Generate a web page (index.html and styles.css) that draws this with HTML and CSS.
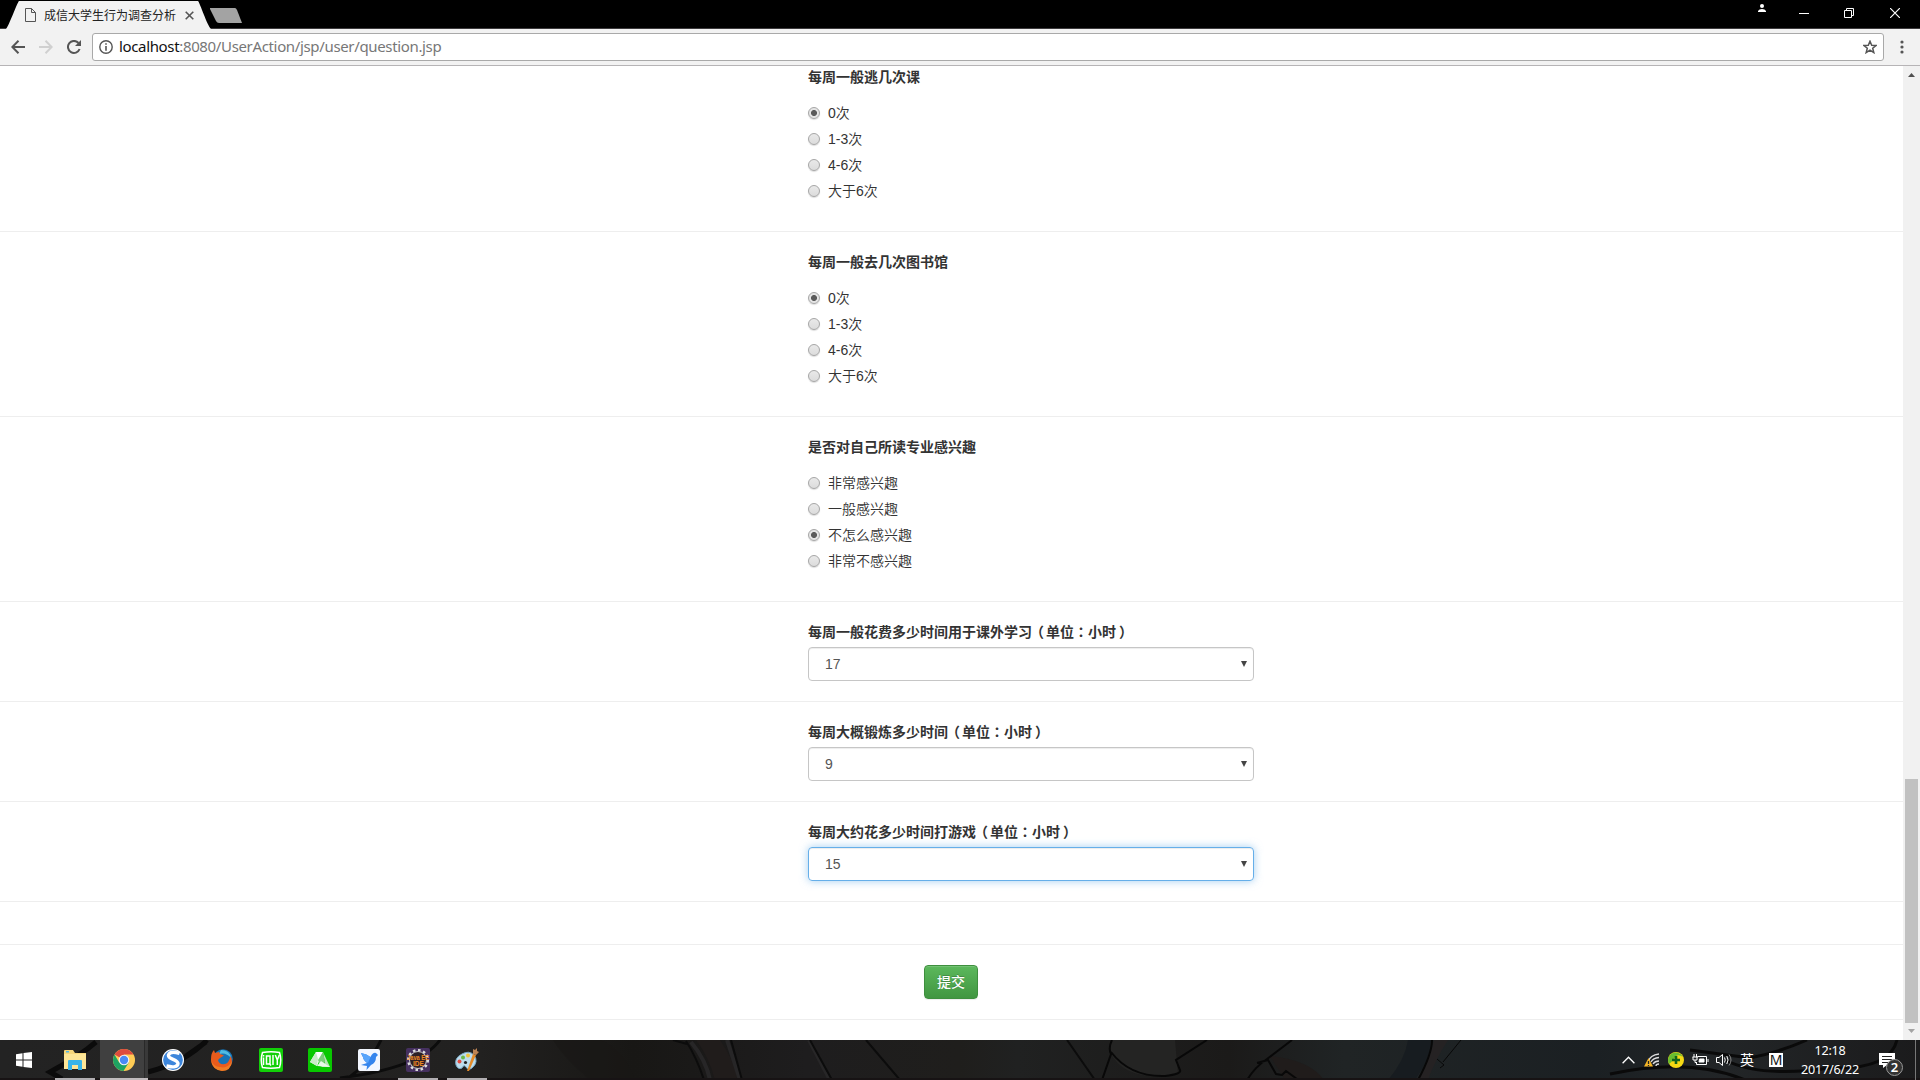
FILE: index.html
```html
<!DOCTYPE html>
<html lang="zh-CN">
<head>
<meta charset="utf-8">
<title>成信大学生行为调查分析</title>
<link rel="stylesheet" href="styles.css">
</head>
<body>
<div class="screen">
  <header class="titlebar">
    <svg class="tabs" width="260" height="29" viewBox="0 0 260 29">
      <path d="M6 29 C9 26 17 3 19 1 H198 C200 3 207 25 211 29Z" fill="#f2f2f2"/>
      <path d="M210 8 H235 Q236 8 237 10 L242 23 H219 Q217 23 216 21 L210 9Z" fill="#a3a3a3"/>
    </svg>
    <div class="tab">
      <svg width="11" height="14" viewBox="0 0 11 14" fill="none" stroke="#555"><path d="M.5.5H6.500L10.500 4.500V13.500H.500Z M6.500.500V4.500H10.500"/></svg>
      <span class="tab-title">成信大学生行为调查分析</span>
      <svg width="9" height="9" viewBox="0 0 9 9" stroke="#555" stroke-width="1.6"><path d="M.7.7 8.300 8.300M8.300.700.700 8.300"/></svg>
    </div>
    <div class="window-controls">
      <svg class="person" width="8" height="9" viewBox="0 0 8 9" fill="#fff"><circle cx="4" cy="2" r="2"/><path d="M0 8V7Q1 5 4 5T8 7V8Z"/></svg>
      <svg class="minimize" width="10" height="10" viewBox="0 0 10 10" stroke="#fff"><path d="M0 5.500H10"/></svg>
      <svg class="restore" width="10" height="10" viewBox="0 0 10 10" fill="none" stroke="#fff"><path d="M.5 2.500H7.500V9.500H.500ZM2.500 2.500V.500H9.500V7.500H7.500"/></svg>
      <svg class="close" width="10" height="10" viewBox="0 0 10 10" stroke="#fff" stroke-width="1.2"><path d="M0 0 10 10M10 0 0 10"/></svg>
    </div>
  </header>
  <nav class="toolbar">
    <svg width="14" height="14" viewBox="0 0 14 14" fill="none" stroke="#555" stroke-width="2"><path d="M14 7H1.500M7.500.800 1.300 7 7.500 13.200"/></svg>
    <svg width="14" height="14" viewBox="0 0 14 14" fill="none" stroke="#d0d0d0" stroke-width="2"><path d="M0 7H12.500M6.500.800 12.700 7 6.500 13.200"/></svg>
    <svg width="14" height="14" viewBox="0 0 14 14" fill="none" stroke="#555" stroke-width="2"><path d="M12.600 9A6 6 0 1 1 11.500 3"/><path d="M14 0V6H8Z" fill="#555" stroke="none"/></svg>
    <div class="address">
      <svg width="14" height="14" viewBox="0 0 14 14"><circle cx="7" cy="7" r="6.200" fill="none" stroke="#555" stroke-width="1.400"/><path d="M6.200 3.200H7.800V4.800H6.200ZM6.200 6H7.800V10.800H6.200Z" fill="#555"/></svg>
      <span class="url">localhost<span class="path">:8080/UserAction/jsp/user/question.jsp</span></span>
      <svg width="14" height="14" viewBox="0 0 14 14" fill="none" stroke="#555" stroke-width="1.500"><path d="M7 1.200 8.700 5.200 13 5.500 9.700 8.300 10.800 12.600 7 10.200 3.200 12.600 4.300 8.300 1 5.500 5.300 5.200Z"/></svg>
    </div>
    <svg class="more" width="4" height="14" viewBox="0 0 4 14" fill="#555"><circle cx="2" cy="2" r="1.600"/><circle cx="2" cy="7" r="1.600"/><circle cx="2" cy="12" r="1.600"/></svg>
  </nav>
  <div class="viewport">
    <form class="survey">
      <section class="question first">
        <h2>每周一般逃几次课</h2>
        <div class="options">
          <label><input type="radio" name="skip" checked>0次</label>
          <label><input type="radio" name="skip">1-3次</label>
          <label><input type="radio" name="skip">4-6次</label>
          <label><input type="radio" name="skip">大于6次</label>
        </div>
      </section>
      <section class="question">
        <h2>每周一般去几次图书馆</h2>
        <div class="options">
          <label><input type="radio" name="library" checked>0次</label>
          <label><input type="radio" name="library">1-3次</label>
          <label><input type="radio" name="library">4-6次</label>
          <label><input type="radio" name="library">大于6次</label>
        </div>
      </section>
      <section class="question">
        <h2>是否对自己所读专业感兴趣</h2>
        <div class="options">
          <label><input type="radio" name="major">非常感兴趣</label>
          <label><input type="radio" name="major">一般感兴趣</label>
          <label><input type="radio" name="major" checked>不怎么感兴趣</label>
          <label><input type="radio" name="major">非常不感兴趣</label>
        </div>
      </section>
      <section class="question">
        <h2>每周一般花费多少时间用于课外学习<span class="open">（</span>单位<span class="colon" lang="zh-TW">：</span>小时<span class="shut">）</span></h2>
        <div class="select">17<svg width="6" height="6" viewBox="0 0 6 6"><path d="M0 0H6L3 6Z" fill="#444"/></svg></div>
      </section>
      <section class="question">
        <h2>每周大概锻炼多少时间<span class="open">（</span>单位<span class="colon" lang="zh-TW">：</span>小时<span class="shut">）</span></h2>
        <div class="select">9<svg width="6" height="6" viewBox="0 0 6 6"><path d="M0 0H6L3 6Z" fill="#444"/></svg></div>
      </section>
      <section class="question">
        <h2>每周大约花多少时间打游戏<span class="open">（</span>单位<span class="colon" lang="zh-TW">：</span>小时<span class="shut">）</span></h2>
        <div class="select focused">15<svg width="6" height="6" viewBox="0 0 6 6"><path d="M0 0H6L3 6Z" fill="#444"/></svg></div>
      </section>
      <div class="spacer"></div>
      <div class="actions"><button class="submit" type="button">提交</button></div>
      <div class="spacer"></div>
    </form>
    <div class="scrollbar">
      <svg width="7" height="4" viewBox="0 0 7 4"><path d="M0 4 3.500 0 7 4Z" fill="#505050"/></svg>
      <div class="thumb"></div>
      <svg width="7" height="4" viewBox="0 0 7 4"><path d="M0 0 3.500 4 7 0Z" fill="#a3a3a3"/></svg>
    </div>
  </div>
  <footer class="taskbar">
    <svg class="wallpaper" width="1920" height="40" viewBox="0 0 1920 40" fill="none">
      <defs><linearGradient id="bar"><stop offset="0" stop-color="#232323"/><stop offset=".25" stop-color="#222120"/><stop offset=".33" stop-color="#181715"/><stop offset=".42" stop-color="#1e1d1e"/><stop offset=".5" stop-color="#1f1e1c"/><stop offset=".53" stop-color="#202121"/><stop offset=".64" stop-color="#1b1a19"/><stop offset=".7" stop-color="#202425"/><stop offset=".83" stop-color="#1b2023"/><stop offset=".9" stop-color="#222527"/><stop offset="1" stop-color="#1b1b1c"/></linearGradient></defs>
      <path fill="url(#bar)" d="M0 0H1920V40H0Z"/>
      <path fill="#191716" d="M553 0Q563 17 590 40H635Q625 10 600 0Z" opacity=".6"/>
      <path fill="#201c1b" d="M696 0H720Q734 20 738 40H715Q708 15 696 0ZM1270 16Q1310 20 1324 40H1285Z"/>
      <path stroke="#272627" stroke-width="4" d="M691 2Q706 20 710 40M727 0 740 40M809 0 830 40"/>
      <path fill="#242423" d="M1111 0H1175L1178 34Q1125 43 1110 12Z"/>
      <path fill="#171c20" d="M1408 0H1431Q1430 20 1415 40H1388Q1405 20 1408 0Z"/>
      <path fill="#252223" d="M1434 0H1448Q1435 20 1428 40H1417Q1430 20 1434 0Z"/>
      <path stroke="#0b0b0b" stroke-width="5" d="M96 2Q80 16 50 32L62 39M207 0Q186 22 148 32M206 2 186 16"/>
      <path stroke="#0c0c0c" stroke-width="3" d="M381 0Q370 24 345 40M440 0Q420 28 340 38"/>
      <path stroke="#0c0c0c" stroke-width="2" d="M673 0 687 4M686 1Q697 18 704 40M731 0 742 40M810 0 832 40M866 0 900 40M1067 0 1095 40"/>
      <path stroke="#080808" stroke-width="2" d="M1112 0Q1108 8 1111 14L1102 40M1111 12Q1130 37 1165 36 1182 34 1180 30L1176 20 1207 0M1292 0 1267 19Q1255 27 1247 40M1257 23 1268 20 1276 34 1282 35 1286 31 1297 39M1432 0Q1432 14 1418 40"/>
      <path stroke="#080808" d="M1461 0 1443 22M1437 19 1444 25 1440 28"/>
      <path stroke="#0a0a0a" stroke-width="3" d="M1807 0Q1780 12 1750 18L1690 10M1725 20Q1760 38 1830 28 1890 30 1897 0M1610 34Q1690 17 1745 40"/>
      <path fill="#171314" d="M0 38H1920V40H0Z"/>
    </svg>
    <div class="apps">
      <div class="app start"><svg width="16" height="16" viewBox="0 0 16 16" fill="#fff"><path d="M0 2.200 6.500 1.300V7.500H0ZM7.500 1.100 16 0V7.500H7.500ZM0 8.500H6.500V14.700L0 13.800ZM7.500 8.500H16V16L7.500 14.900Z"/></svg></div>
      <div class="app running"><svg width="22" height="20" viewBox="0 0 22 20"><path d="M0 3V1Q0 0 1 0H9L11 3H22V19H0Z" fill="#f6d67a"/><path d="M0 4H22V19H0Z" fill="#fde596"/><path d="M2 1H5V2.500H2Z" fill="#56b7e5"/><path d="M4 20V11Q4 10 5 10H17Q18 10 18 11V20H14V15H8V20Z" fill="#39b4e9"/></svg></div>
      <div class="app active"><svg width="22" height="22" viewBox="0 0 22 22"><circle cx="11" cy="11" r="11" fill="#fc5"/><path d="M11 11 1.500 5.500A11 11 0 0 1 20.500 5.500H11Z" fill="#dd4b3e"/><path d="M1.500 5.500A11 11 0 0 0 10.500 22L15.800 13.500 11 11 6.200 13.500Z" fill="#1ea362"/><circle cx="11" cy="11" r="5.300" fill="#f5f5f5"/><circle cx="11" cy="11" r="4.200" fill="#4a8af4"/></svg></div>
      <div class="app"><svg width="22" height="22" viewBox="0 0 22 22"><circle cx="11" cy="11" r="11" fill="#fff"/><circle cx="11" cy="11" r="9.900" fill="#3d86db"/><path d="M17.500 4.500Q8 1.500 6.500 6C5.500 10.500 16 10 16 14.500Q15.500 19.500 4.500 17" fill="none" stroke="#fff" stroke-width="3.400"/></svg></div>
      <div class="app"><svg width="22" height="22" viewBox="0 0 22 22"><circle cx="12" cy="10" r="9.800" fill="#1673b5"/><path d="M10 1Q19 1 20 9 15 3 8 5Z" fill="#4fbbe2"/><path d="M0 10Q0 4 3 1L4 4 8 3 9 5 13 6.500 9 9 7 11Q8 16 14 15 18 14 19.500 7 23 14 18 19A11 11 0 0 1 0 11Z" fill="#e95b1c"/><path d="M0 10Q2 18 9 18 17 20 21 12 20 22 11 22 1 21 0 10Z" fill="#ef7c23"/></svg></div>
      <div class="app"><svg width="24" height="24" viewBox="0 0 24 24"><rect width="24" height="24" rx="2" fill="#12cf08"/><path d="M3.500 4.500Q12 3 20.500 4.500 23 12 20.500 19.500 12 21 3.500 19.500 1 12 3.500 4.500Z" fill="none" stroke="#fff" stroke-width="1.500"/><path d="M4.500 7V8.500M4.500 9.500V17M7.500 8H11V16H7.500ZM10 15 12 17.500M14 7V17M16.300 7 18.300 12 20.300 7M18.300 12V17" fill="none" stroke="#fff" stroke-width="1.500"/></svg></div>
      <div class="app"><svg width="24" height="24" viewBox="0 0 24 24"><rect width="24" height="24" rx="2" fill="#08c800"/><path d="M8 4H15L9 18 2 14Z" fill="#fff"/><path d="M8 4 10 11 9 18 2 14Z" fill="#c9ebc8"/><path d="M15 4 22 19H13L17 15Z" fill="#b7e5b5"/><path d="M15 4 10 12 13 19 17 14Z" fill="#79ce77"/><path d="M9 18 13 13 22 19Z" fill="#e8f8e8"/></svg></div>
      <div class="app"><svg width="22" height="22" viewBox="0 0 22 22"><rect width="22" height="22" rx="2" fill="#f3f7ff"/><path d="M3 4Q9 5 12.500 8 15 3 18 4L20 6 18 8Q18 14 13 16L8.500 21 9 17 3 16 9 14Q5 11 5 8Q4 7 3 4Z" fill="#3585ed"/><path d="M3 4Q9 5 12.500 8L10 14Q5 11 5 8Z" fill="#57a4fb"/></svg></div>
      <div class="app running"><svg class="ide-icon" width="24" height="24" viewBox="0 0 24 24"><rect width="24" height="24" rx="2" fill="#45305f"/><circle cx="12" cy="12" r="9.800" fill="none" stroke="#ddd" stroke-width="2.500" stroke-dasharray="2.500 2.600"/><circle cx="12" cy="12" r="8.500" fill="#2d2025" stroke="#ccc"/><text class="ide" x="1" y="11.500" textLength="22" lengthAdjust="spacingAndGlyphs">Java EE</text><text class="ide" x="7" y="18" textLength="11" lengthAdjust="spacingAndGlyphs">IDE</text></svg></div>
      <div class="app running"><svg width="24" height="24" viewBox="0 0 24 24"><path d="M1 17Q-1 10 7 6 14 2 19 7 24 14 17 20 13 23 11 19 9 16 7 20 3 22 1 17Z" fill="#bddcec" stroke="#79a9c5"/><circle cx="4.500" cy="13.500" r="2" fill="#e44d42"/><circle cx="8" cy="9.500" r="2" fill="#6ab84a"/><circle cx="13" cy="7.500" r="2" fill="#f0c339"/><circle cx="10.500" cy="14.500" r="1.600" fill="#222"/><path d="M18 6 21 7 14 23 12 23Z" fill="#e48b29"/><path d="M18 1 20 2 22 0 22 3 24 4 21 7 18 6Z" fill="#bd8454"/></svg></div>
    </div>
    <div class="tray">
      <svg width="13" height="8" viewBox="0 0 13 8" fill="none" stroke="#fff" stroke-width="1.300"><path d="M.6 7.200 6.500 1.200 12.400 7.200"/></svg>
      <svg class="wifi" width="16" height="14" viewBox="0 0 16 14" fill="none" stroke="#ddd" stroke-width="1.300"><path d="M4 9Q6 2 15 1M7 9Q9 5 15 4.500M9 11Q11 8 15 8M12 13Q12 11 15 11"/><path d="M0 13.500 4.500 5 9 13.500Z" fill="#f5b526" stroke="none"/><path d="M4.500 8V11M4.500 12V13" stroke="#222"/></svg>
      <svg class="shield" width="16" height="16" viewBox="0 0 16 16"><circle cx="8" cy="8" r="8" fill="#f6d914"/><path d="M3 2A8 8 0 0 1 15 5Q11 2 8 4 4 10 1 12A8 8 0 0 1 3 2Z" fill="#69bd30"/><path d="M8 4V12M4 8H12" stroke="#12651b" stroke-width="2.600"/></svg>
      <svg class="battery" width="17" height="12" viewBox="0 0 17 12" fill="none" stroke="#fff"><path d="M5.500 2.500H14.500V10.500H4.500V8M16 5V8M.500 3H6M1 3V6H5V3M2 0V3M4.500 0V3M3 6V8.500H5"/><path d="M7.500 5H12V8H7Z" fill="#fff"/></svg>
      <svg class="volume" width="16" height="14" viewBox="0 0 16 14" fill="none" stroke="#fff"><path d="M.500 4.500H3L6.500 1.500V12.500L3 9.500H.500Z"/><path d="M8.500 4.500Q10 7 8.500 9.500M10.800 3Q13.300 7 10.800 11"/><path d="M13 1.500Q17 7 13 12.500" stroke="#888"/></svg>
      <span class="ime">英</span>
      <span class="ime-mode">M</span>
      <div class="clock"><span>12:18</span><span>2017/6/22</span></div>
      <div class="notifications">
        <svg width="16" height="15" viewBox="0 0 16 15"><path d="M0 0H16V12H8L4 15V12H0Z" fill="#fff"/><path d="M3 3.500H13M3 6.500H13M3 9.500H9" stroke="#222"/></svg>
        <span class="badge">2</span>
      </div>
      <div class="show-desktop"></div>
    </div>
  </footer>
</div>
</body>
</html>
```
FILE: styles.css
```css
* { box-sizing: border-box; }
body { margin: 0; background: #fff; color: #333; font: 14px/20px "Liberation Sans", "Noto Sans CJK SC", sans-serif; }
svg { display: block; flex: none; }
.screen { width: 1920px; height: 1080px; display: flex; flex-direction: column; overflow: hidden; }

.titlebar { position: relative; height: 29px; flex: none; display: flex; justify-content: space-between; background: #000; border-bottom: 1px solid #3d3b3d; }
.tabs { position: absolute; left: 0; top: 0; }
.tab { position: relative; display: flex; align-items: center; height: 30px; padding-left: 25px; }
.tab-title { width: 132px; margin: -1px 9px 0 8px; color: #222; font: 12px/20px "Noto Sans CJK SC", sans-serif; white-space: nowrap; }
.window-controls { display: flex; align-items: flex-start; padding-right: 20px; }
.person { margin: 4px 33px 0 0; }
.minimize { margin: 8px 35px 0 0; }
.restore { margin: 8px 36px 0 0; }
.close { margin-top: 8px; }

.toolbar { height: 37px; flex: none; display: flex; align-items: center; gap: 14px; padding: 0 16px 0 11px; background: #f2f2f2; border-bottom: 1px solid #b6b4b6; }
.address { flex: 1; height: 28px; display: flex; align-items: center; margin: 0 2px 0 -3px; padding: 0 6px; background: #fff; border: 1px solid #a9a9a9; border-radius: 3px; }
.url { flex: 1; margin: -2px 0 0 6px; color: #111; font: 15px/24px "Noto Sans", sans-serif; letter-spacing: -0.35px; }
.path { color: #777; }

.viewport { height: 974px; flex: none; display: flex; }
.survey { flex: 1; }
.question { display: flex; flex-direction: column; padding: 20px 649px 20px 808px; border-bottom: 1px solid #eee; }
.first { padding-top: 1px; }
h2 { height: 20px; margin: 0 0 5px; font-size: 14px; line-height: 20px; font-weight: 700; white-space: nowrap; }
.open { margin: 0 2px 0 -2px; }
.colon { font-family: "Liberation Sans", "Noto Sans CJK TC", sans-serif; }
.shut { margin-left: 3px; }
.options { display: flex; flex-direction: column; gap: 6px; padding: 11px 0 10px; font-weight: 350; }
.options label { display: flex; align-items: center; gap: 8px; height: 20px; white-space: nowrap; }
.options input { appearance: none; width: 12px; height: 12px; margin: 0; border: 1px solid #a6a6a6; border-radius: 50%; background: linear-gradient(#e9e9e9, #dcdcdc); box-shadow: 0 1px 1px #0002; }
.options input:checked { background: radial-gradient(circle, #5b5b5b 2.6px, #e5e5e5 3.4px); }
.select { display: flex; align-items: center; justify-content: space-between; width: 446px; height: 34px; padding: 0 6px 0 16px; color: #555; border: 1px solid #c6c6c6; border-radius: 4px; box-shadow: inset 0 1px 1px rgba(0,0,0,.075); }
.focused { border-color: #66afe9; box-shadow: inset 0 1px 1px rgba(0,0,0,.075), 0 0 8px rgba(102,175,233,.6); }
.spacer { height: 43px; border-bottom: 1px solid #eee; }
.spacer:last-child { height: 20px; border: 0; }
.actions { display: flex; justify-content: center; height: 75px; padding: 20px 1px 0 0; border-bottom: 1px solid #eee; }
.submit { width: 54px; height: 34px; padding: 0 0 2px; color: #fff; border: 1px solid #3e8f3e; border-radius: 4px; background: linear-gradient(#5cb85c, #419641); box-shadow: inset 0 1px 0 rgba(255,255,255,.15), 0 1px 1px rgba(0,0,0,.075); font: 500 14px/20px "Noto Sans CJK SC", sans-serif; text-shadow: 0 -1px 0 rgba(0,0,0,.2); }
.scrollbar { width: 17px; display: flex; flex-direction: column; align-items: center; justify-content: space-between; padding: 7px 0; background: #f1f1f1; }
.thumb { width: 13px; height: 244px; margin: auto 0 6px; background: #c1c1c1; }

.taskbar { position: relative; height: 40px; flex: none; display: flex; justify-content: space-between; color: #fff; }
.wallpaper { position: absolute; inset: 0; }
.apps, .tray { position: relative; display: flex; }
.apps { gap: 1px; }
.app { width: 48px; height: 40px; display: flex; align-items: center; justify-content: center; }
.start { margin-right: 2px; }
.running { background: linear-gradient(#b1aeb1, #b1aeb1) center bottom / 40px 2px no-repeat; }
.active { background: linear-gradient(#c0bbbd, #c0bbbd) bottom / 100% 2px no-repeat, linear-gradient(90deg, #404040 44px, #292929 44px, #292929 45px, #393939 45px); }
.ide-icon { overflow: visible; }
.ide { font: 700 7px "Liberation Sans", sans-serif; fill: #f08a24; }
.tray { align-items: center; padding-right: 4px; font-family: "Noto Sans", "Noto Sans CJK SC", sans-serif; }
.wifi { margin-left: 9px; }
.shield { margin-left: 8px; }
.battery { margin-left: 8px; }
.volume { margin-left: 7px; }
.ime { margin-left: 8px; width: 14px; font-size: 14px; }
.ime-mode { width: 14px; height: 14px; margin-left: 15px; background: #fff; color: #111; font: 14px/14px "Noto Sans", sans-serif; text-align: center; }
.clock { width: 66px; margin-left: 14px; display: flex; flex-direction: column; align-items: center; font-size: 12.6px; line-height: 19px; letter-spacing: -.2px; }
.notifications { position: relative; margin: 0 20px 0 16px; }
.badge { position: absolute; left: 7px; top: 6px; width: 17px; height: 17px; border: 1px solid #999; border-radius: 50%; background: #333; font-size: 13px; line-height: 15px; font-weight: 600; text-align: center; }
.show-desktop { width: 1px; height: 40px; background: #777; }
```
